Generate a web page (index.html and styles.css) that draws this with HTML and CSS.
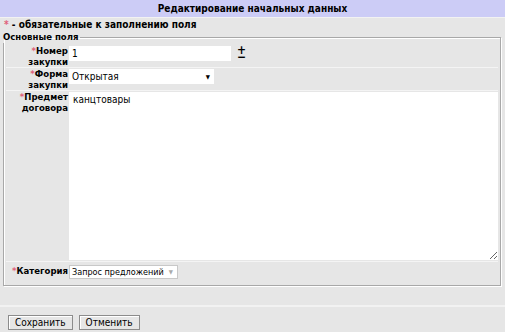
FILE: index.html
```html
<!DOCTYPE html>
<html lang="ru">
<head>
  <meta charset="UTF-8">
  <title>Редактирование начальных данных</title>
  <link rel="stylesheet" href="styles.css">
</head>
<body>

<div class="title">Редактирование начальных данных</div>
<div class="note"><span class="req">*</span> - обязательные к заполнению поля</div>

<form id="editForm">
  <fieldset>
    <legend>Основные поля</legend>

    <div class="row">
      <label><span class="req">*</span>Номер закупки</label>
      <div class="field">
        <input type="text" class="num" value="1">
        <span class="pm">+<br>&minus;</span>
      </div>
    </div>

    <div class="row">
      <label><span class="req">*</span>Форма закупки</label>
      <div class="field">
        <div class="select form-select">Открытая <span class="arrow">&#9660;</span></div>
      </div>
    </div>

    <div class="row">
      <label><span class="req">*</span>Предмет договора</label>
      <div class="field">
        <textarea class="subject">канцтовары</textarea>
      </div>
    </div>

    <div class="row last">
      <label><span class="req">*</span>Категория</label>
      <div class="field">
        <div class="select cat-select">Запрос предложений <span class="arrow light">&#9660;</span></div>
      </div>
    </div>
  </fieldset>

  <div class="spacer"></div>

  <div class="buttons">
    <button type="button">Сохранить</button>
    <button type="button">Отменить</button>
  </div>
</form>

</body>
</html>
```

FILE: styles.css
```css
body { margin: 0; background: #e6e6e6; font-family: "DejaVu Sans", Verdana, sans-serif; font-stretch: condensed; font-size: 10px; color: #000; }
.title { background: #ccccf6; text-align: center; font-weight: bold; font-size: 10px; height: 17px; line-height: 17px; border-bottom: 1px solid #f2f2f2; }
.note { font-weight: bold; padding: 0 4px; height: 13px; line-height: 13px; font-size: 10px; }
.req { color: #e0607a; font-weight: bold; }

fieldset { margin: 0 4px 0 3px; padding: 2px 2px 5px 2px; border: 1px solid #a8a8a8; box-shadow: inset 1px 1px #fff, 1px 1px #fff; }
legend { font-weight: bold; font-size: 9.5px; line-height: 12px; padding: 0 2px 0 1px; margin-left: -4px; }

.row { display: flex; border-bottom: 1px solid #f4f4f4; }
.row.last { border-bottom: 0; padding: 3px 0 1px; }
.row label { width: 62px; flex: none; text-align: right; font-weight: bold; font-size: 9.5px; line-height: 11px; padding-right: 1px; }
.row.last label { line-height: 12px; }
.field { display: flex; align-items: flex-start; flex: 1; padding-top: 1px; }
.row.last .field { padding-top: 0; }

input.num { width: 162px; height: 15px; box-sizing: border-box; border: 0; padding: 0 3px; margin: 0; font-family: inherit; font-stretch: condensed; font-size: 10px; background: #fff; }
.pm { font-weight: bold; font-size: 12px; line-height: 7px; margin-left: 6px; padding-top: 1px; }

.select { background: #fff; height: 15px; line-height: 15px; padding: 0 3px; font-size: 10px; position: relative; box-sizing: border-box; white-space: nowrap; }
.form-select { width: 145px; }
.cat-select { width: 109px; height: 14px; border: 1px solid #c8c8c8; line-height: 12px; font-size: 9px; padding: 0 2px; }
.arrow { position: absolute; right: 4px; top: 0; font-size: 6px; }
.arrow.light { color: #aaa; }

textarea.subject { display: block; width: 429px; height: 168px; box-sizing: border-box; border: 0; margin: 0 0 1px; padding: 2px 4px; resize: both; font-family: inherit; font-stretch: condensed; font-size: 10px; }

.spacer { height: 19px; border-bottom: 2px solid #f2f2f2; }
.buttons { padding: 8px 8px 0; display: flex; gap: 6px; }
button { font-family: inherit; font-stretch: condensed; font-size: 10px; background: #e6e6e6; border: 1px solid #8c8c8c; box-shadow: inset 1px 1px #fff; height: 15px; padding: 0 6px; }
```
